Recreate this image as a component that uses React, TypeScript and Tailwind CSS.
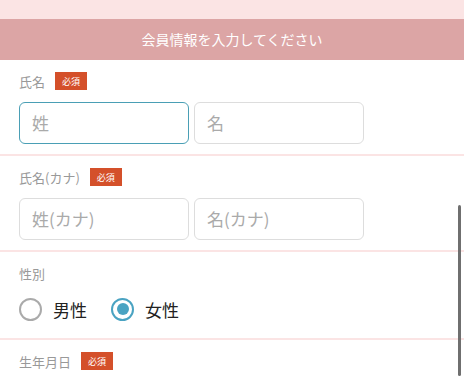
import React from 'react';

const font = { fontFamily: '"Noto Sans CJK JP", "Noto Sans", sans-serif' };

function Badge() {
  return (
    <span className="inline-flex items-center justify-center w-[32px] h-[18px] bg-[#d4502a] text-white text-[9px] leading-none">
      必須
    </span>
  );
}

function Label({ text, required }: { text: string; required?: boolean }) {
  return (
    <div className="flex items-center gap-[10px] h-[18px]">
      <span className="text-[13px] text-[#999] leading-none">{text}</span>
      {required && <Badge />}
    </div>
  );
}

function Field({ placeholder, focused }: { placeholder: string; focused?: boolean }) {
  return (
    <div
      className={`w-[170px] h-[42px] rounded-[6px] border flex items-center px-[12px] text-[17px] text-[#aaa] ${
        focused ? 'border-[#4a9fb5]' : 'border-[#ddd]'
      }`}
    >
      {placeholder}
    </div>
  );
}

function Radio({ label, checked }: { label: string; checked?: boolean }) {
  return (
    <div className="flex items-center gap-[11px]">
      {checked ? (
        <span className="w-[23px] h-[23px] rounded-full border-[2.5px] border-[#4aa3c2] flex items-center justify-center">
          <span className="w-[12px] h-[12px] rounded-full bg-[#4aa3c2]" />
        </span>
      ) : (
        <span className="w-[23px] h-[23px] rounded-full border-2 border-[#aaa]" />
      )}
      <span className="text-[17px] text-[#222] leading-none">{label}</span>
    </div>
  );
}

export default function App() {
  return (
    <div className="relative w-[464px] h-[376px] overflow-hidden bg-white" style={font}>
      <div className="h-[19px] bg-[#fbe4e4]" />
      <div className="h-[41px] bg-[#dca5a5] flex items-center justify-center text-white text-[14px]">
        会員情報を入力してください
      </div>

      <section className="px-[19px] pt-[12px] pb-[10px] border-b-2 border-[#fbe4e4]">
        <Label text="氏名" required />
        <div className="flex gap-[5px] mt-[12px]">
          <Field placeholder="姓" focused />
          <Field placeholder="名" />
        </div>
      </section>

      <section className="px-[19px] pt-[12px] pb-[10px] border-b-2 border-[#fbe4e4]">
        <Label text="氏名(カナ)" required />
        <div className="flex gap-[5px] mt-[12px]">
          <Field placeholder="姓(カナ)" />
          <Field placeholder="名(カナ)" />
        </div>
      </section>

      <section className="px-[19px] pt-[12px] pb-[14px] border-b-2 border-[#fbe4e4]">
        <Label text="性別" />
        <div className="flex items-center gap-[24px] h-[30px] mt-[12px]">
          <Radio label="男性" />
          <Radio label="女性" checked />
        </div>
      </section>

      <section className="px-[19px] pt-[12px]">
        <Label text="生年月日" required />
      </section>

      <div className="absolute left-[458px] top-[205px] w-[3px] h-[171px] bg-[#6f6f6f] rounded-full" />
    </div>
  );
}
